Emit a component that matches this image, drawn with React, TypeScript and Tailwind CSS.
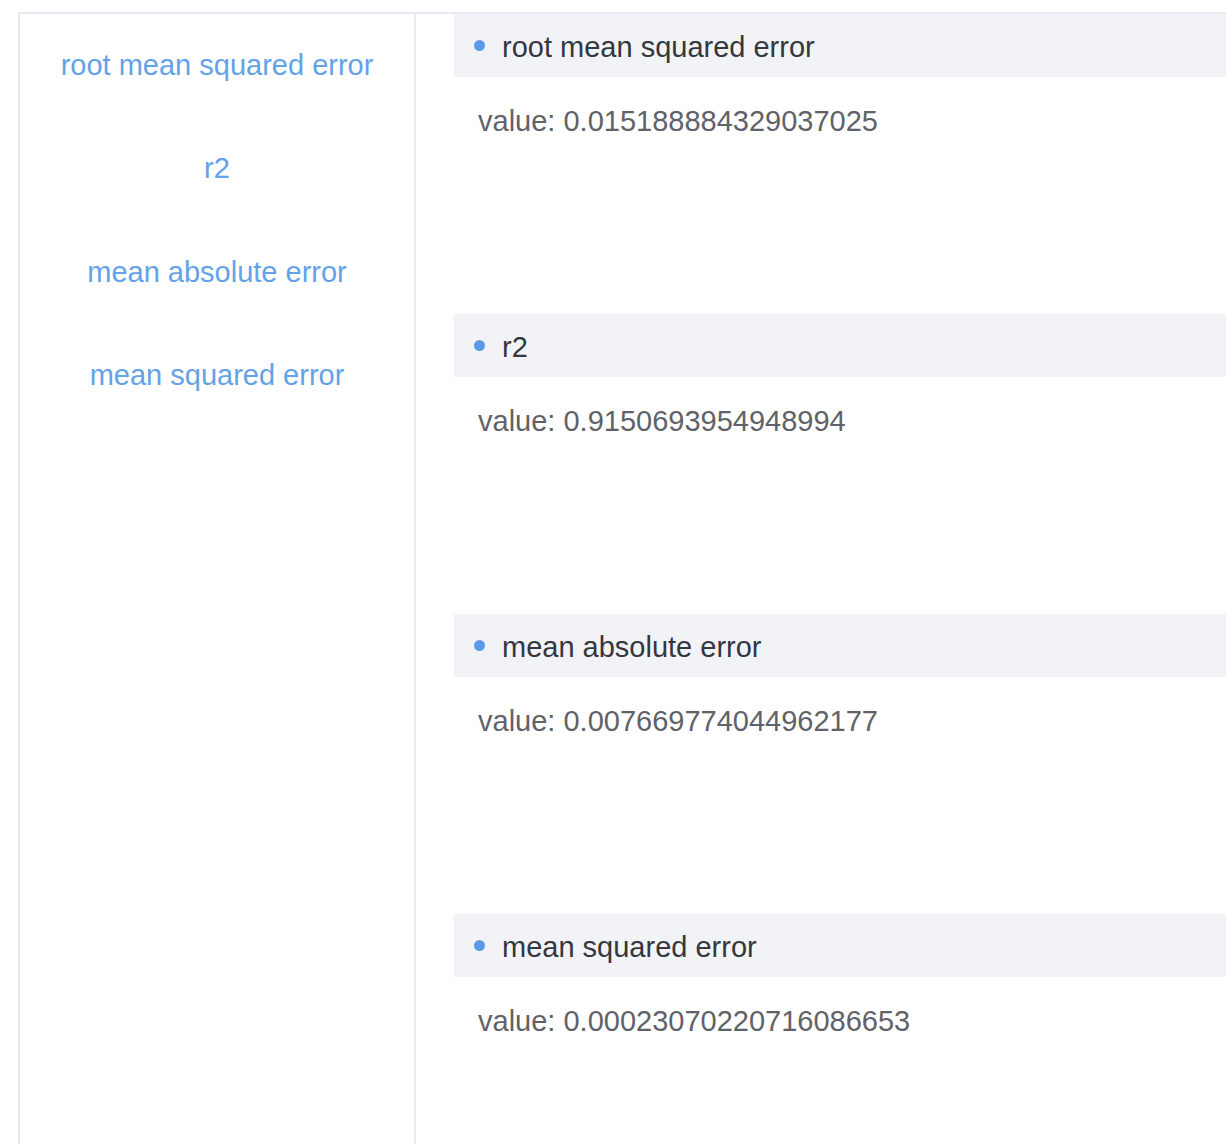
const metrics = [
  { name: 'root mean squared error', value: '0.015188884329037025' },
  { name: 'r2', value: '0.9150693954948994' },
  { name: 'mean absolute error', value: '0.007669774044962177' },
  { name: 'mean squared error', value: '0.00023070220716086653' },
];

export default function App() {
  return (
    <div className="w-[1226px] h-[1144px] overflow-hidden bg-white font-['Liberation_Sans',Arial,sans-serif]">
      <div className="ml-[18px] mt-[12px] flex h-[1200px] border-l-2 border-t-2 border-[#e6eaf2]">
        {/* sidebar */}
        <div className="w-[396px] shrink-0 border-r-2 border-[#e6eaf2] pt-[31px]">
          {metrics.map((m) => (
            <div
              key={m.name}
              className="h-[103.3px] text-center text-[29px] leading-[40px] text-[#64a2e8]"
            >
              {m.name}
            </div>
          ))}
        </div>

        {/* content */}
        <div className="flex-1 pl-[38px]">
          {metrics.map((m) => (
            <div key={m.name} className="h-[300px]">
              <div className="flex h-[63px] items-center bg-[#f2f3f7] pl-[20px] pt-[2px]">
                <span className="mb-[2px] h-[11px] w-[11px] rounded-full bg-[#5b9be6]" />
                <span className="ml-[17px] text-[29px] leading-[40px] text-[#34373d]">{m.name}</span>
              </div>
              <div className="mt-[24px] pl-[24px] text-[29px] leading-[40px] text-[#5f6268]">
                value: {m.value}
              </div>
            </div>
          ))}
        </div>
      </div>
    </div>
  );
}
